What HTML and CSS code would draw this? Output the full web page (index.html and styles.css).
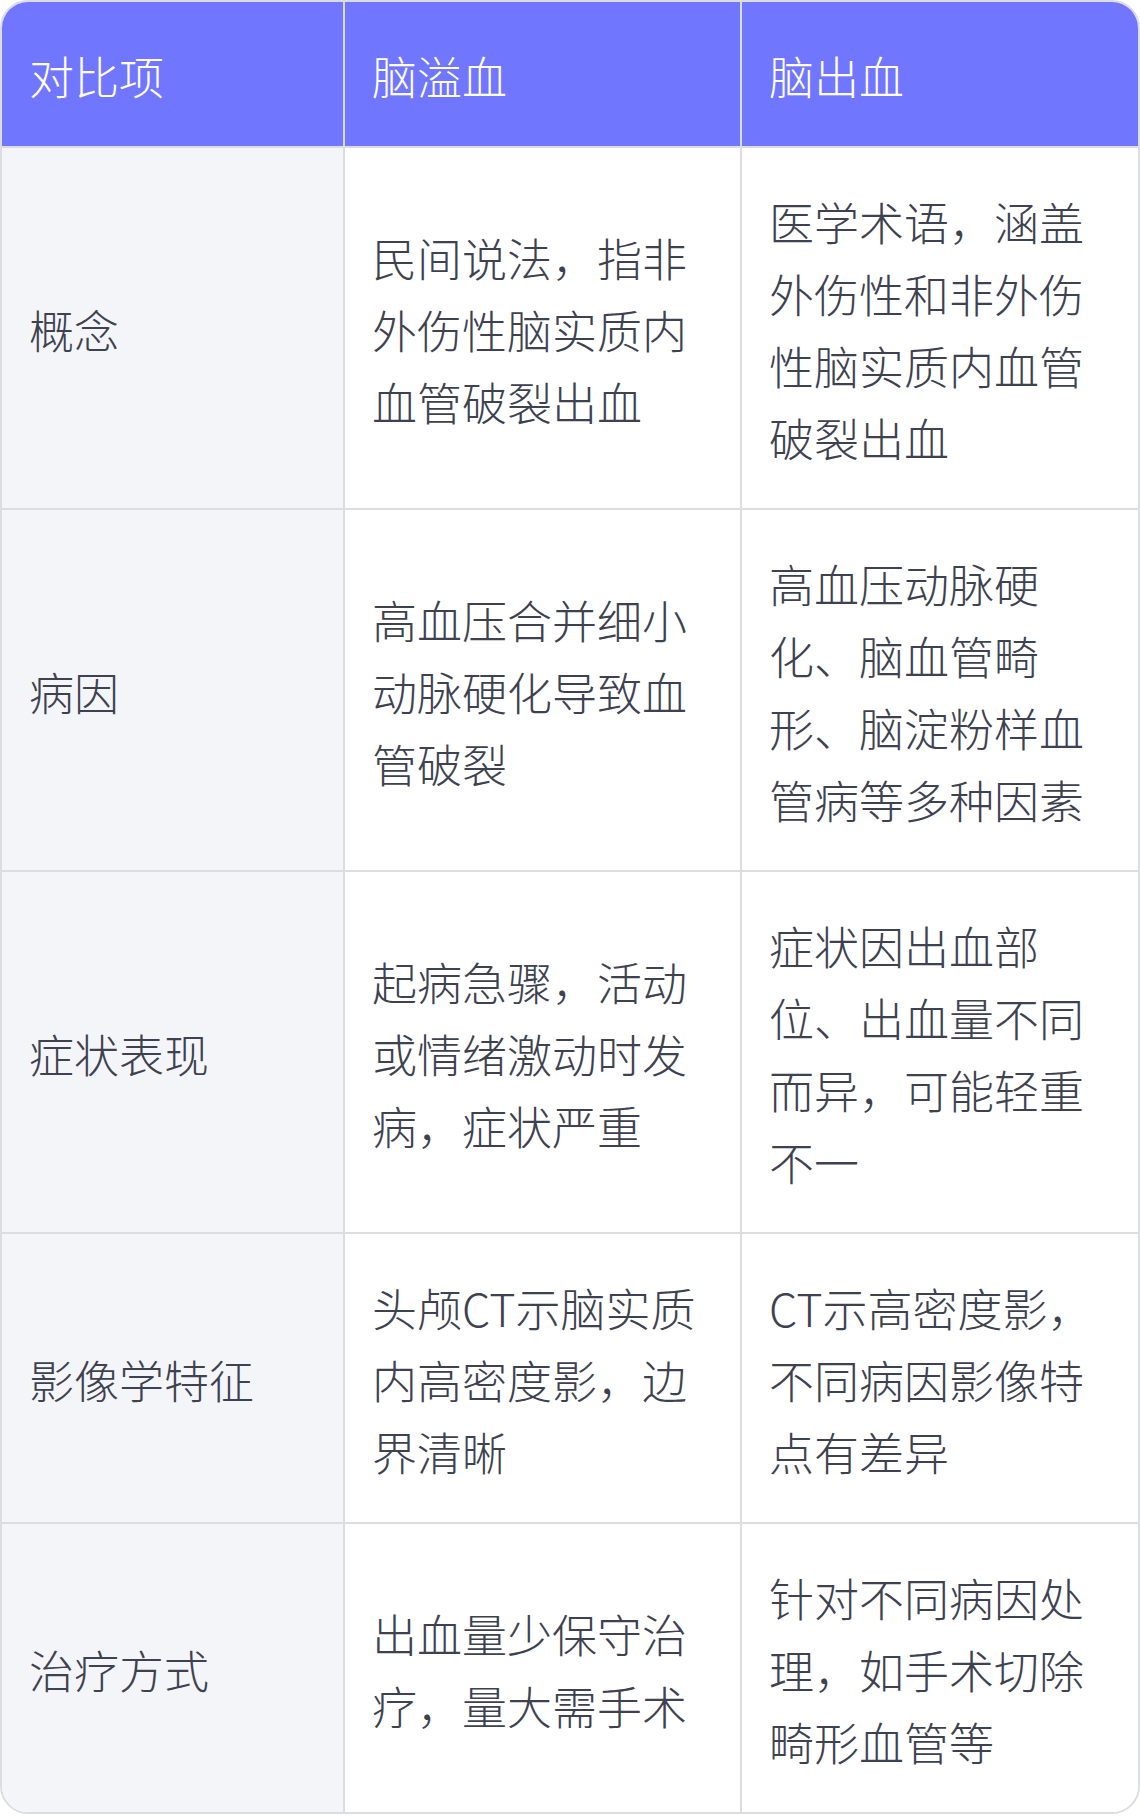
FILE: index.html
```html
<!DOCTYPE html>
<html lang="zh-CN">
<head>
<meta charset="utf-8">
<link rel="stylesheet" href="styles.css">
</head>
<body>
<div class="wrap">
<table class="cmp">
<colgroup><col class="c1"><col class="c2"><col class="c3"></colgroup>
<thead>
<tr><th>对比项</th><th>脑溢血</th><th class="last">脑出血</th></tr>
</thead>
<tbody>
<tr><td class="key">概念</td><td>民间说法，指非外伤性脑实质内血管破裂出血</td><td class="last">医学术语，涵盖外伤性和非外伤性脑实质内血管破裂出血</td></tr>
<tr><td class="key">病因</td><td>高血压合并细小动脉硬化导致血管破裂</td><td class="last">高血压动脉硬化、脑血管畸形、脑淀粉样血管病等多种因素</td></tr>
<tr><td class="key">症状表现</td><td>起病急骤，活动或情绪激动时发病，症状严重</td><td class="last">症状因出血部位、出血量不同而异，可能轻重不一</td></tr>
<tr><td class="key">影像学特征</td><td>头颅CT示脑实质内高密度影，边界清晰</td><td class="last">CT示高密度影，不同病因影像特点有差异</td></tr>
<tr class="end"><td class="key">治疗方式</td><td>出血量少保守治疗，量大需手术</td><td class="last">针对不同病因处理，如手术切除畸形血管等</td></tr>
</tbody>
</table>
</div>
</body>
</html>
```

FILE: styles.css
```css
html, body {
  margin: 0;
  padding: 0;
  background: #ffffff;
}
.wrap {
  width: 1140px;
  box-sizing: border-box;
  border: 2px solid #dcdde3;
  border-radius: 28px;
  overflow: hidden;
}
.cmp {
  width: 1136px;
  table-layout: fixed;
  border-collapse: separate;
  border-spacing: 0;
  font-family: "Noto Sans CJK SC", "Noto Sans", sans-serif;
  font-size: 45px;
  font-weight: 300;
  line-height: 72px;
  color: #3d4150;
}
.c1 { width: 343px; }
.c2 { width: 397px; }
.c3 { width: 396px; }
.cmp th, .cmp td {
  padding: 38px 22px 34px 27px;
  text-align: left;
  vertical-align: middle;
  border-right: 2px solid #dcdde3;
  border-bottom: 2px solid #dcdde3;
  word-break: break-all;
}
.cmp th {
  background: #7176ff;
  color: #ffffff;
  font-weight: 300;
}
.cmp td { background: #ffffff; }
.cmp td.key { background: #f4f5f9; }
.cmp .last { border-right: none; }
.cmp tr.end td { border-bottom: none; }
```
